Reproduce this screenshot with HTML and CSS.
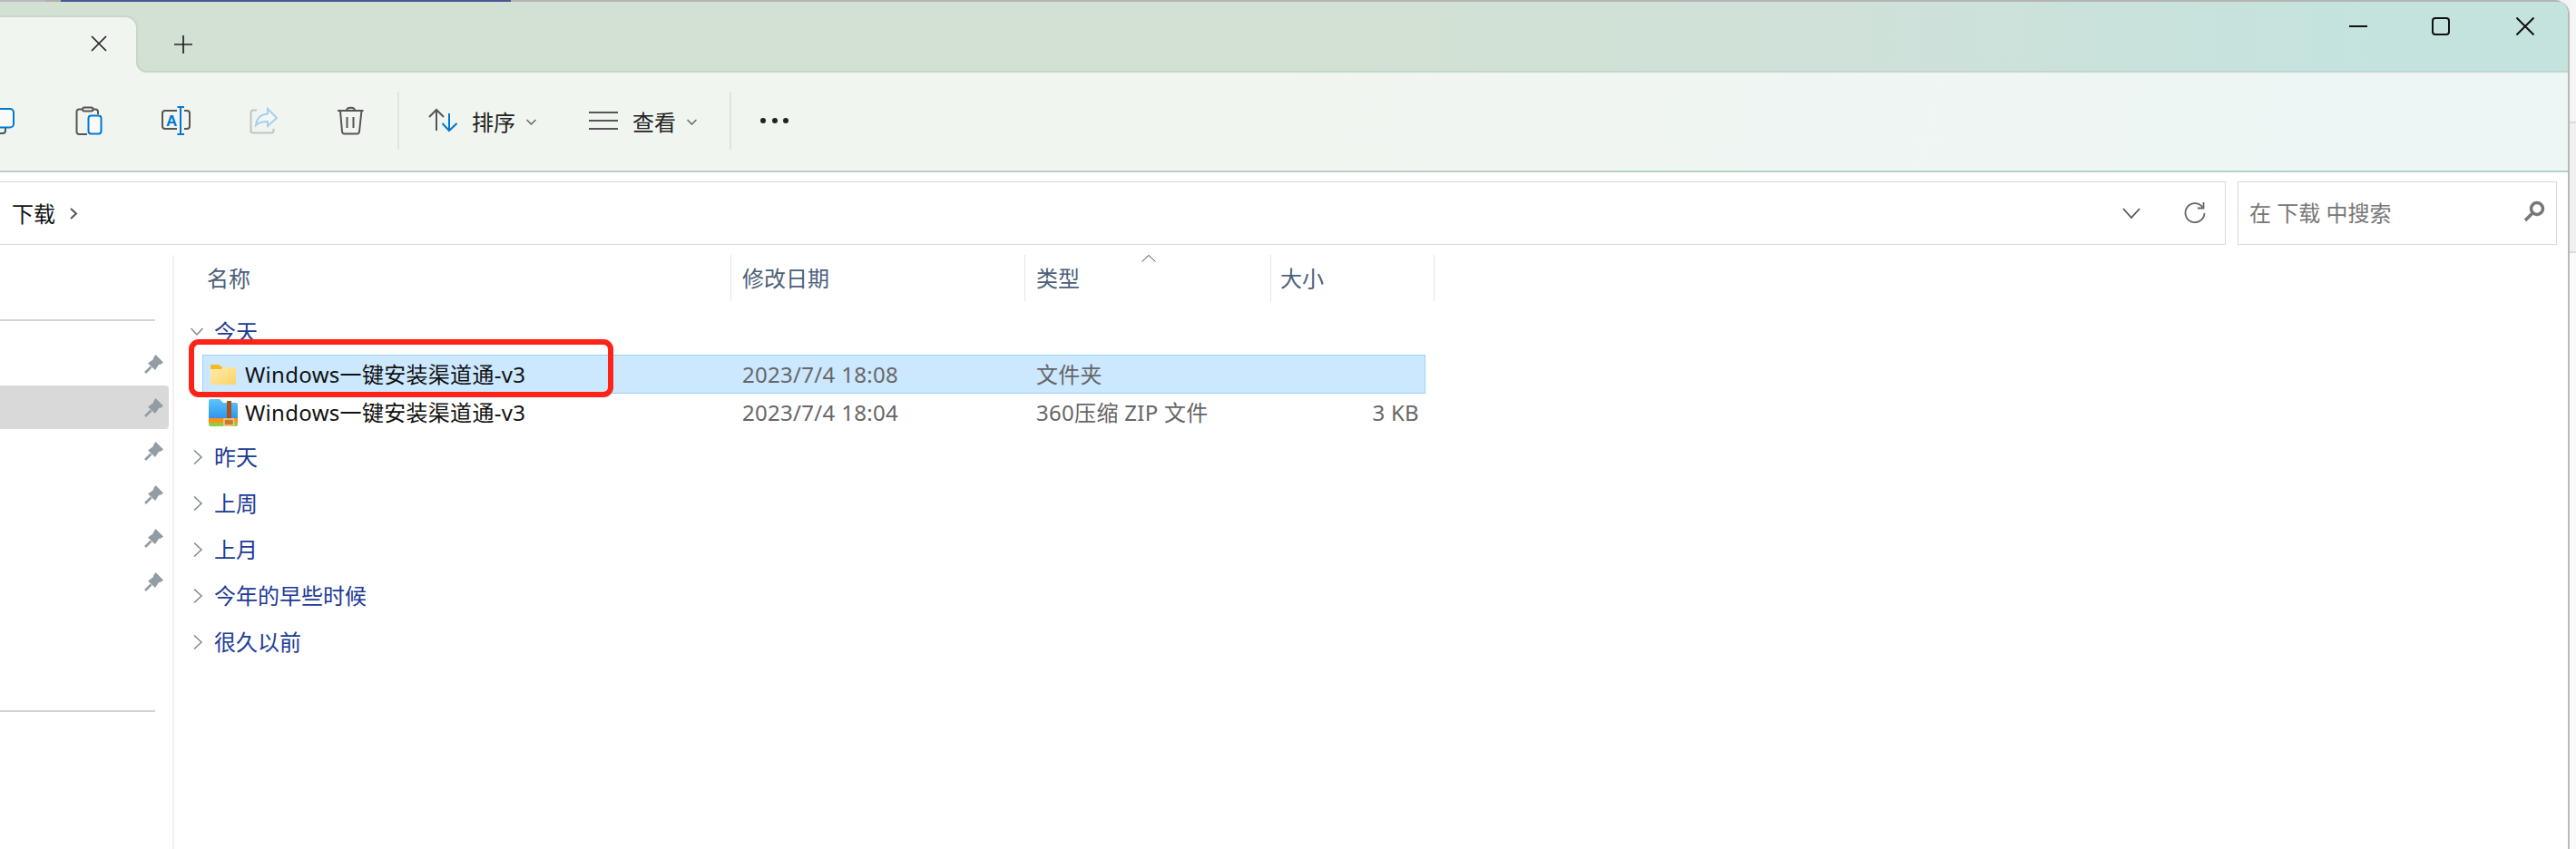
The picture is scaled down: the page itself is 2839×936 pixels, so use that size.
FILE: index.html
```html
<!DOCTYPE html>
<html lang="zh-CN">
<head>
<meta charset="utf-8">
<title>下载</title>
<link rel="stylesheet" href="styles.css">
</head>
<body>
<div class="window">
  <div class="strip"><span class="strip-a"></span><span class="strip-b"></span><span class="strip-blue"></span></div>

  <header class="titlebar">
    <div class="tab">
      <svg class="tab-close" width="18" height="18" viewBox="0 0 18 18"><path d="M1 1L17 17M17 1L1 17"/></svg>
    </div>
    <svg class="new-tab" width="20" height="20" viewBox="0 0 20 20"><path d="M10 0V20M0 10H20"/></svg>
    <div class="spacer"></div>
    <div class="controls">
      <div class="ctl"><svg width="20" height="20" viewBox="0 0 20 20"><path d="M0 10H20"/></svg></div>
      <div class="ctl ctl-max"><svg width="20" height="20" viewBox="0 0 20 20"><rect x="1" y="1" width="18" height="18" rx="3"/></svg></div>
      <div class="ctl"><svg width="20" height="20" viewBox="0 0 20 20"><path d="M.5 .5L19.5 19.5M19.5 .5L.5 19.5"/></svg></div>
    </div>
  </header>

  <div class="toolbar">
    <div class="tbtn tbtn-first">
      <svg class="ico" width="32" height="32" viewBox="0 0 32 32"><path class="g" d="M8 24v3a3 3 0 0 0 3 3h6a3 3 0 0 0 3-3v-3"/><rect class="b" x="-2" y="3" width="31" height="20.5" rx="4"/></svg>
    </div>
    <div class="tbtn">
      <svg class="ico" width="32" height="32" viewBox="0 0 32 32"><path class="g" d="M14 31H5a2.500 2.500 0 0 1-2.500-2.500V6A2.500 2.500 0 0 1 5 3.500h3M21 3.500h2.500A2.500 2.500 0 0 1 26 6v3"/><rect class="g" x="9" y="1.500" width="11.500" height="4" rx="2"/><rect class="b" x="15.500" y="10.500" width="14" height="20" rx="3"/></svg>
    </div>
    <div class="tbtn">
      <svg class="ico" width="32" height="32" viewBox="0 0 32 32"><path class="g" d="M17 5H4a3 3 0 0 0-3 3v14a3 3 0 0 0 3 3h13M25 5h3a3 3 0 0 1 3 3v14a3 3 0 0 1-3 3h-3"/><path class="bl" d="M21 1V31M17.500 1H25M17.500 31H25"/><text class="ico-a" x="5" y="21.500">A</text></svg>
    </div>
    <div class="tbtn">
      <svg class="ico" width="32" height="32" viewBox="0 0 32 32"><path class="dim" d="M9 4.500H5A2.500 2.500 0 0 0 2.500 7v20A2.500 2.500 0 0 0 5 29.500h20a2.500 2.500 0 0 0 2.500-2.500v-2"/><path class="dimb" d="M21 3L31 13L21 22V17C15 17 11 18 8 21C9 13 14 9 21 8.500Z"/></svg>
    </div>
    <div class="tbtn">
      <svg class="ico" width="32" height="32" viewBox="0 0 32 32"><path class="g" d="M2 5H30.500M12 5C12 .5 21 .5 21 5M5 5L7 28Q7.300 30.500 9.500 30.500H23.500Q25.800 30.500 26 28L28.500 5M12.500 12V24M19.500 12V24"/></svg>
    </div>
    <div class="sep sep-a"></div>
    <div class="menu menu-sort">
      <svg class="ico" width="32" height="32" viewBox="0 0 32 32"><path class="g" d="M9 27V4M1 12L9 4L17 12"/><path class="bl" d="M23 8V27M15.500 19L23 27L31.500 19"/></svg>
      <span class="menu-text">排序</span>
      <svg class="caret" width="11" height="7" viewBox="0 0 11 7"><path d="M.5 1L5.500 6L10.500 1"/></svg>
    </div>
    <div class="menu menu-view">
      <svg class="ico" width="32" height="32" viewBox="0 0 32 32"><path class="g" d="M0 7H32M0 16H32M0 25H32"/></svg>
      <span class="menu-text">查看</span>
      <svg class="caret" width="11" height="7" viewBox="0 0 11 7"><path d="M.5 1L5.500 6L10.500 1"/></svg>
    </div>
    <div class="sep sep-b"></div>
    <div class="dots"><i></i><i></i><i></i></div>
  </div>

  <div class="addressrow">
    <div class="address">
      <span class="crumb">下载</span>
      <svg class="crumb-arrow" width="10" height="13" viewBox="0 0 10 13"><path d="M2 1L8 6.500L2 12"/></svg>
      <div class="spacer"></div>
      <svg class="addr-down" width="20" height="12" viewBox="0 0 20 12"><path d="M1 1L10 11L19 1"/></svg>
      <svg class="addr-refresh" width="24" height="24" viewBox="0 0 24 24"><path d="M20.500 6.500A10.500 10.500 0 1 0 22.500 13"/><path d="M21.500 1V7.500H15"/></svg>
    </div>
    <div class="search">
      <span class="search-hint">在 下载 中搜索</span>
      <svg class="search-ico" width="24" height="24" viewBox="0 0 24 24"><circle cx="15" cy="9" r="6.500"/><path d="M10 14L2 22"/></svg>
    </div>
  </div>

  <main class="content">
    <nav class="sidebar">
      <div class="rule rule-a"></div>
      <div class="pin-row"><svg class="pin" width="21" height="21" viewBox="0 0 21 21"><use href="#pin"/></svg></div>
      <div class="pin-row active"><svg class="pin" width="21" height="21" viewBox="0 0 21 21"><use href="#pin"/></svg></div>
      <div class="pin-row"><svg class="pin" width="21" height="21" viewBox="0 0 21 21"><use href="#pin"/></svg></div>
      <div class="pin-row"><svg class="pin" width="21" height="21" viewBox="0 0 21 21"><use href="#pin"/></svg></div>
      <div class="pin-row"><svg class="pin" width="21" height="21" viewBox="0 0 21 21"><use href="#pin"/></svg></div>
      <div class="pin-row"><svg class="pin" width="21" height="21" viewBox="0 0 21 21"><use href="#pin"/></svg></div>
      <div class="rule rule-b"></div>
    </nav>

    <section class="list">
      <div class="head">
        <div class="hcol hcol-name">名称</div>
        <div class="hcol hcol-date">修改日期</div>
        <div class="hcol hcol-type">类型
          <svg class="sort-up" width="16" height="8" viewBox="0 0 16 8"><path d="M.5 7.500L8 .5L15.500 7.500"/></svg>
        </div>
        <div class="hcol hcol-size">大小</div>
      </div>

      <div class="group group-open">
        <svg class="chev" width="14" height="16" viewBox="0 0 14 16"><path d="M.5 4L7 11L13.500 4"/></svg>
        <span>今天</span>
      </div>

      <div class="file selected">
        <div class="fname">
          <span class="ficon">
            <svg width="28" height="22" viewBox="0 0 28 22">
              <defs><linearGradient id="fg" x1="0" y1="0" x2="1" y2="1"><stop offset="0" stop-color="#ffeeb0"/><stop offset="1" stop-color="#fbd262"/></linearGradient></defs>
              <path d="M1 0H9L13 3H13V6H0V1Q0 0 1 0Z" fill="#f6ba21"/>
              <path d="M0 5H12L14 3H27Q28 3 28 4V21Q28 22 27 22H1Q0 22 0 21Z" fill="url(#fg)"/>
            </svg>
          </span>
          <span class="ftext">Windows一键安装渠道通-v3</span>
        </div>
        <div class="fcol">2023/7/4 18:08</div>
        <div class="fcol">文件夹</div>
        <div class="fcol fsize"></div>
        <div class="callout"></div>
      </div>

      <div class="file file-second">
        <div class="fname">
          <span class="ficon">
            <svg width="32" height="30" viewBox="0 0 32 30">
              <defs><linearGradient id="zg" x1="0" y1="0" x2="0" y2="1"><stop offset="0" stop-color="#5cc6fc"/><stop offset="1" stop-color="#2f93ea"/></linearGradient></defs>
              <path d="M2 0H12L16 4H30Q32 4 32 6V22H0V2Q0 0 2 0Z" fill="url(#zg)"/>
              <rect x="0" y="21" width="32" height="5" fill="#ff8f16"/>
              <path d="M0 26H32V28Q32 30 30 30H2Q0 30 0 28Z" fill="#8ad043"/>
              <rect x="20" y="2" width="5" height="20" fill="#a5551b"/>
              <rect x="17" y="22" width="10.500" height="7" fill="#c97a2c" stroke="#f3cf8c" stroke-width="1.500"/>
            </svg>
          </span>
          <span class="ftext">Windows一键安装渠道通-v3</span>
        </div>
        <div class="fcol">2023/7/4 18:04</div>
        <div class="fcol">360压缩 ZIP 文件</div>
        <div class="fcol fsize">3 KB</div>
      </div>

      <div class="group group-first"><svg class="chev" width="14" height="16" viewBox="0 0 14 16"><path d="M4 .5L12 8L4 15.500"/></svg><span>昨天</span></div>
      <div class="group"><svg class="chev" width="14" height="16" viewBox="0 0 14 16"><path d="M4 .5L12 8L4 15.500"/></svg><span>上周</span></div>
      <div class="group"><svg class="chev" width="14" height="16" viewBox="0 0 14 16"><path d="M4 .5L12 8L4 15.500"/></svg><span>上月</span></div>
      <div class="group"><svg class="chev" width="14" height="16" viewBox="0 0 14 16"><path d="M4 .5L12 8L4 15.500"/></svg><span>今年的早些时候</span></div>
      <div class="group"><svg class="chev" width="14" height="16" viewBox="0 0 14 16"><path d="M4 .5L12 8L4 15.500"/></svg><span>很久以前</span></div>
    </section>
  </main>
</div>

<aside class="rail">
  <div class="rail-a"></div>
  <div class="rail-b"></div>
  <div class="rail-c"></div>
</aside>

<svg class="defs" width="0" height="0" aria-hidden="true">
  <symbol id="pin" viewBox="0 0 21 21">
    <path d="M12.500 0L21 8.500L18.500 10.500L16 11L12 17L4 9.500L9.500 5.500L10.500 3Z" fill="#919da3"/>
    <path d="M7.500 13.500L1 20" stroke="#919da3" stroke-width="2.600" fill="none"/>
  </symbol>
</svg>
</body>
</html>
```

FILE: styles.css
```css
* { box-sizing: border-box; }

html, body {
  margin: 0;
  height: 100%;
  overflow: hidden;
}

body {
  display: flex;
  width: 2839px;
  height: 936px;
  background: #f4f4f4;
  font-family: "Noto Sans", "Noto Sans CJK SC", sans-serif;
  font-size: 24px;
  line-height: 32px;
  color: #111;
}

svg { display: block; flex: none; fill: none; }
.defs { position: absolute; }
.spacer { flex: 1; }

.window {
  width: 2832px;
  height: 936px;
  flex: none;
  display: flex;
  flex-direction: column;
  background: #fff;
  border-right: 2px solid #b9b9b9;
  border-top-right-radius: 16px;
  overflow: hidden;
}

.strip {
  display: flex;
  height: 2px;
  flex: none;
  background: #b4b4b4;
}
.strip-a { width: 50px; background: #bcb8bc; }
.strip-b { width: 17px; background: #b0aeb0; }
.strip-blue { width: 496px; background: #4a5795; }

/* title bar */
.titlebar {
  display: flex;
  align-items: flex-start;
  height: 78px;
  flex: none;
  background: linear-gradient(90deg, #d3e1d2 0, #d3e1d2 50%, #cfe1d9 72%, #c4e3df 93%, #c4e3df 100%);
  border-bottom: 2px solid #c3d6cc;
}

.tab {
  position: relative;
  width: 152px;
  height: 63px;
  margin-top: 15px;
  flex: none;
  background: #f1f5f0;
  border-top: 2px solid #c8d5c8;
  border-right: 2px solid #c8d5c8;
  border-top-right-radius: 14px;
}
.tab::before {
  content: "";
  position: absolute;
  right: -2px;
  bottom: -2px;
  width: 2px;
  height: 2px;
  background: #c8d5c8;
}
.tab::after {
  content: "";
  position: absolute;
  left: 150px;
  bottom: 0;
  width: 14px;
  height: 14px;
  border-left: 2px solid #c8d5c8;
  border-bottom: 2px solid #c8d5c8;
  border-bottom-left-radius: 12px;
  box-shadow: -5px 5px 0 0 #f1f5f0;
  clip-path: inset(0 0 -7px -7px);
}
.tab-close {
  margin: 20px 0 0 100px;
  stroke: #222;
  stroke-width: 1.700;
}
.new-tab {
  margin: 37px 0 0 40px;
  stroke: #222;
  stroke-width: 1.700;
}

.controls { display: flex; height: 54px; margin-right: 1px; }
.ctl {
  width: 92px;
  height: 54px;
  display: flex;
  align-items: center;
  justify-content: center;
  stroke: #111;
  stroke-width: 2;
}
.ctl-max { padding-right: 2px; }

/* toolbar */
.toolbar {
  display: flex;
  align-items: center;
  height: 110px;
  flex: none;
  padding-bottom: 2px;
  border-bottom: 2px solid;
  border-image: linear-gradient(90deg, #bccebf 0, #bccebf 50%, #afd5d1 100%) 1;
  background: linear-gradient(100deg, #f1f5f0 0, #f1f5f0 50%, #ecf6f5 100%);
}
.tbtn {
  width: 96px;
  height: 32px;
  flex: none;
  display: flex;
  justify-content: center;
}
.tbtn-first { margin-left: -46px; }

.ico .g { stroke: #555; stroke-width: 2; }
.ico .b { stroke: #0078d4; stroke-width: 2; fill: #fafafa; }
.ico .bl { stroke: #0078d4; stroke-width: 2; }
.ico .dim { stroke: #c0c4c2; stroke-width: 2; }
.ico .dimb { stroke: #a6d0ef; stroke-width: 2; fill: #f3f7f5; }
.ico-a {
  font-family: "Liberation Sans", sans-serif;
  font-size: 17px;
  font-weight: 700;
  fill: #0078d4;
}

.sep {
  width: 2px;
  height: 64px;
  flex: none;
  background: #e1e5e1;
}
.sep-a { margin-left: 4px; }
.sep-b { margin-left: 36px; }

.menu {
  display: flex;
  align-items: center;
  flex: none;
  color: #222;
}
.menu-sort { margin-left: 32px; }
.menu-view { margin-left: 58px; }
.menu-text { margin: 3px 0 0 16px; width: 48px; }
.caret {
  margin-left: 12px;
  margin-top: 2px;
  stroke: #666;
  stroke-width: 1.500;
}

.dots {
  display: flex;
  gap: 6.500px;
  margin-left: 32px;
}
.dots i {
  width: 6px;
  height: 6px;
  border-radius: 50%;
  background: #222;
}

/* address row */
.addressrow {
  display: flex;
  gap: 13px;
  height: 70px;
  margin: 10px 12px 0 -1px;
  flex: none;
}
.address, .search {
  display: flex;
  align-items: center;
  border: 1px solid #d9d9d9;
}
.address { flex: 1; padding: 0 21px 0 13px; }
.search { width: 352px; padding: 0 12px 0 12px; }
.crumb { color: #111; margin-top: 2px; }
.crumb-arrow { margin-left: 15px; stroke: #555; stroke-width: 2; }
.addr-down { stroke: #555; stroke-width: 1.800; margin-right: 48px; }
.addr-refresh { stroke: #666; stroke-width: 1.800; margin-top: -2px; }
.search-hint { flex: 1; color: #777; }
.search-ico { stroke: #777; stroke-width: 3.500; margin-top: -4px; }

/* content */
.content {
  display: flex;
  flex: 1;
  min-height: 0;
  margin-top: 11px;
}
.sidebar {
  width: 192px;
  flex: none;
  border-right: 2px solid #f2f2f2;
}
.rule {
  width: 171px;
  height: 2px;
  background: #d4d4d4;
}
.rule-a { margin: 71px 0 23px; }
.rule-b { margin-top: 118px; }
.pin-row {
  width: 186px;
  height: 48px;
  display: flex;
  align-items: center;
  justify-content: flex-end;
  padding-right: 6px;
  border-radius: 0 4px 4px 0;
}
.pin-row.active { background: #d9d9d9; }

.list { flex: 1; min-width: 0; }

.head {
  display: grid;
  grid-template-columns: 614px 324px 271px 180px;
  height: 51px;
  width: 1389px;
  color: #4c607a;
}
.hcol {
  display: flex;
  align-items: center;
  position: relative;
  border-right: 1px solid #e5e5e5;
  padding-left: 12px;
}
.hcol-name { padding-left: 36px; }
.hcol-size { padding-left: 10px; }
.sort-up {
  position: absolute;
  left: 128px;
  top: 0;
  stroke: #444;
  stroke-width: 1;
}

.group {
  display: flex;
  align-items: center;
  height: 51px;
  padding-left: 18px;
  color: #203a96;
}
.group-open { margin-top: 8px; }
.group-first { margin-top: 2px; }
.chev {
  margin-right: 12px;
  stroke: #7f8a8f;
  stroke-width: 1.500;
}

.file {
  position: relative;
  display: grid;
  grid-template-columns: 581px 324px 271px 170px;
  align-items: center;
  width: 1348px;
  height: 43px;
  margin-left: 31px;
  border: 1px solid transparent;
  color: #666;
  letter-spacing: .3px;
}
.file-second { height: 42px; }
.file.selected {
  background: #cce8ff;
  border-color: #99d1ff;
}
.fname {
  display: flex;
  align-items: center;
  padding-left: 6px;
  color: #111;
}
.ficon {
  width: 32px;
  display: flex;
  justify-content: center;
  margin-right: 8px;
}
.fcol { padding-left: 13px; white-space: nowrap; }
.fsize { text-align: right; padding-right: 6px; }

.callout {
  position: absolute;
  left: -16px;
  top: -18px;
  width: 468px;
  height: 64px;
  border: 6.500px solid #ff2217;
  border-radius: 11px;
  pointer-events: none;
}

/* desktop behind the window */
.rail {
  flex: 1;
  display: flex;
  flex-direction: column;
}
.rail-a { height: 136px; background: #f5f5f5; border-bottom: 2px solid #dcdcdc; }
.rail-b { height: 143px; background: #f1f1f1; border-bottom: 2px solid #dcdcdc; }
.rail-c { flex: 1; background: #fafafa; }
```
